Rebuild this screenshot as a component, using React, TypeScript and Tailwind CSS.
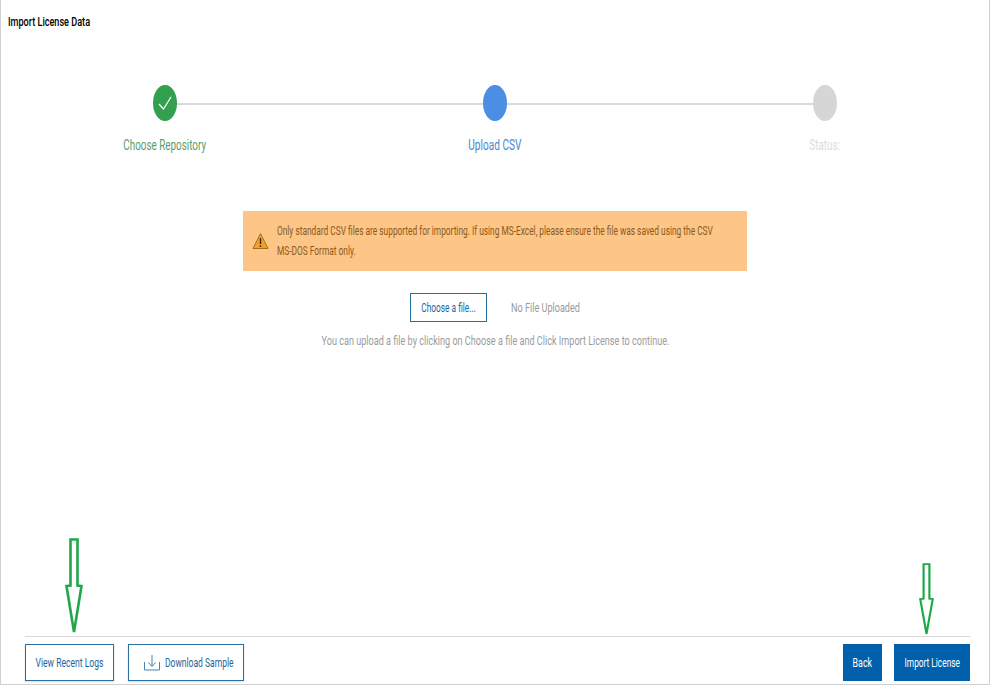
import React from 'react';

// the reference is squeezed horizontally, so text is narrowed per label to match
const Squeezed: React.FC<{ className: string; children: React.ReactNode }> = ({ className, children }) => (
  <span className={`inline-block whitespace-nowrap ${className}`}>{children}</span>
);

const steps = [
  { label: 'Choose Repository', text: 'text-[#5a9e68]', dot: 'bg-[#33a04f]', squeeze: 'scale-x-[0.705]', done: true },
  { label: 'Upload CSV', text: 'text-[#4a86d0]', dot: 'bg-[#4a8fe4]', squeeze: 'scale-x-[0.72]', done: false },
  { label: 'Status:', text: 'text-[#dcdcdc]', dot: 'bg-[#d6d6d6]', squeeze: 'scale-x-[0.7]', done: false },
];

const Arrow: React.FC<{ className: string }> = ({ className }) => (
  <svg className={className} viewBox="0 0 18 98" fill="none" preserveAspectRatio="none">
    <path d="M5.5 1.5H12.5V48L16.5 48.5L9 95L1.5 48.5L5.5 48Z" stroke="#1fa84a" strokeWidth="2.6" />
  </svg>
);

const App: React.FC = () => {
  return (
    <div className="relative h-[692px] w-[993px] bg-white font-['Roboto',sans-serif]">
      <div className="flex h-[685px] w-[990px] flex-col border-x border-b border-[#d0d0d0]">
        <div className="h-[85px] pl-[7px] pt-[14px] text-[13px] leading-[16px] font-medium text-black">
          <Squeezed className="origin-left scale-x-[0.7]">Import License Data</Squeezed>
        </div>

        <div className="ml-[152px] w-[684px]">
          <div className="flex items-center">
            {steps.map((step, i) => (
              <React.Fragment key={step.label}>
                <div className={`flex h-9 w-6 shrink-0 items-center justify-center rounded-[50%] ${step.dot}`}>
                  {step.done && (
                    <svg width="14" height="16" viewBox="0 0 14 16" fill="none">
                      <path d="M1 9L5.5 14L13 2" stroke="white" strokeWidth="1.2" />
                    </svg>
                  )}
                </div>
                {i < steps.length - 1 && <div className="mt-[2px] h-0.5 flex-1 bg-[#dadada]" />}
              </React.Fragment>
            ))}
          </div>
          <div className="mt-[16px] flex justify-between">
            {steps.map((step) => (
              <div key={step.label} className={`flex w-6 justify-center text-[14px] leading-[17px] ${step.text}`}>
                <Squeezed className={`shrink-0 ${step.squeeze}`}>{step.label}</Squeezed>
              </div>
            ))}
          </div>
        </div>

        <div className="mt-[57px] ml-[242px] flex h-[60px] w-[504px] items-center bg-[#fdc586] pl-[9px]">
          <svg width="17" height="18" viewBox="0 0 17 18" className="shrink-0">
            <path d="M8.5 1.5L16 16.5H1Z" fill="#f0a02c" stroke="#a8701e" strokeWidth="1" strokeLinejoin="round" />
            <path d="M8.5 6V12M8.5 13.2V15" stroke="#3d2a10" strokeWidth="1.4" />
          </svg>
          <div className="ml-[8px] text-[12px] leading-[20px] text-[#8a5a20]">
            <Squeezed className="block origin-left scale-x-[0.695]">
              Only standard CSV files are supported for importing. If using MS-Excel, please ensure the file was saved using the CSV
            </Squeezed>
            <Squeezed className="block origin-left scale-x-[0.695]">MS-DOS Format only.</Squeezed>
          </div>
        </div>

        <div className="mt-[22px] ml-[409px] flex items-center">
          <button className="flex h-[29px] w-[77px] items-center justify-center border border-[#1f6f9f] text-[13px] text-[#1f659c]">
            <Squeezed className="shrink-0 scale-x-[0.64]">Choose a file...</Squeezed>
          </button>
          <div className="ml-[24px] w-[70px] text-[13px] text-[#9a9a9a]">
            <Squeezed className="origin-left scale-x-[0.7]">No File Uploaded</Squeezed>
          </div>
        </div>

        <div className="mt-[10px] flex justify-center text-[13px] leading-[18px] text-[#9c9c9c]">
          <Squeezed className="shrink-0 scale-x-[0.7]">You can upload a file by clicking on Choose a file and Click Import License to continue.</Squeezed>
        </div>

        <div className="mt-auto mr-[19px] ml-[24px] flex h-[48px] items-start justify-between border-t border-[#d8d8d8] pt-[7px]">
          <div className="flex gap-[14px]">
            <button className="flex h-[37px] w-[89px] items-center justify-center border border-[#2a6f9f] text-[13px] text-[#1f659c] shadow-[0_1px_2px_rgba(0,0,0,0.15)]">
              <Squeezed className="shrink-0 scale-x-[0.66]">View Recent Logs</Squeezed>
            </button>
            <button className="flex h-[37px] w-[116px] items-center border border-[#2a6f9f] pl-[15px] text-[13px] text-[#1f659c] shadow-[0_1px_2px_rgba(0,0,0,0.15)]">
              <svg width="16" height="17" viewBox="0 0 16 17" fill="none" className="shrink-0">
                <path d="M0.5 8V16H15.5V8M8 1V12M4.5 8.5L8 12.5L11.5 8.5" stroke="#4c86ad" strokeWidth="1" />
              </svg>
              <span className="ml-[5px] w-[70px] text-left">
                <Squeezed className="origin-left scale-x-[0.655]">Download Sample</Squeezed>
              </span>
            </button>
          </div>
          <div className="flex gap-[12px]">
            <button className="flex h-[37px] w-[39px] items-center justify-center bg-[#0060ac] text-[13px] text-white">
              <Squeezed className="shrink-0 scale-x-[0.68]">Back</Squeezed>
            </button>
            <button className="flex h-[37px] w-[76px] items-center justify-center bg-[#0060ac] text-[13px] text-white">
              <Squeezed className="shrink-0 scale-x-[0.64]">Import License</Squeezed>
            </button>
          </div>
        </div>
      </div>

      <Arrow className="absolute top-[538px] left-[65px] h-[97px] w-[18px]" />
      <Arrow className="absolute top-[563px] left-[919px] h-[73px] w-[15px]" />
    </div>
  );
};

export default App;
